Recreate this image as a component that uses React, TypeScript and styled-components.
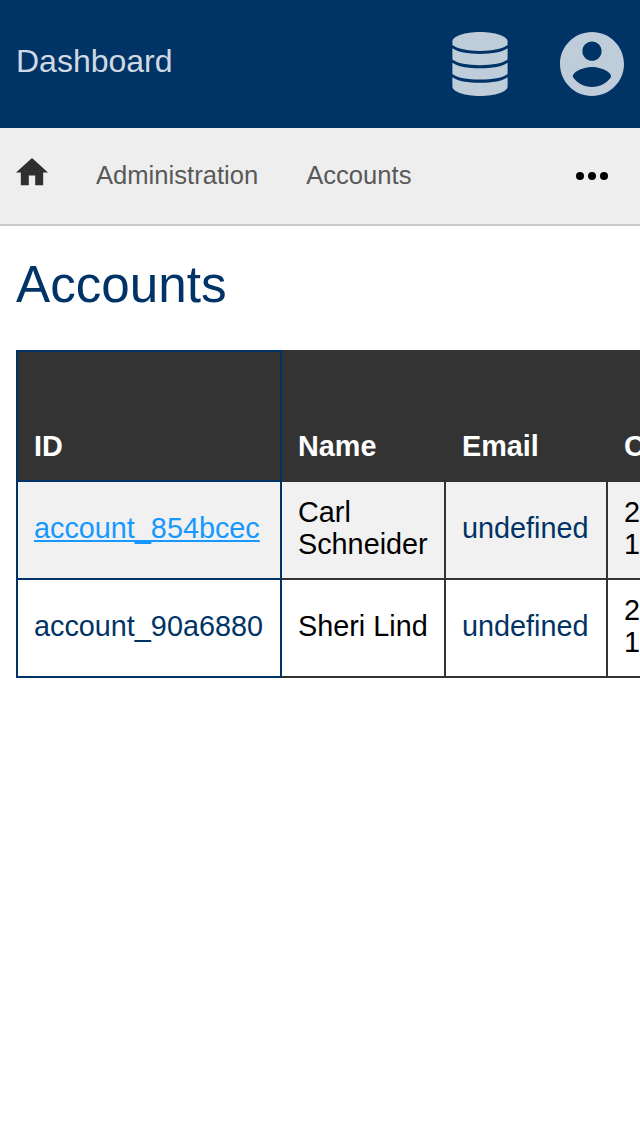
import React from "react";
import styled, { createGlobalStyle, css } from "styled-components";

const GlobalStyle = createGlobalStyle`
  *, *::before, *::after { box-sizing: border-box; }
  html, body { margin: 0; background: #fff; overflow: hidden; }
  body { font-family: "Liberation Sans", Arial, sans-serif; color: #000; }
`;

const Page = styled.div`
  width: 100%;
  height: 1136px;
  overflow: hidden;
`;

const TopBar = styled.header`
  display: flex;
  align-items: center;
  justify-content: space-between;
  height: 128px;
  padding: 0 16px;
  background: #003366;
  color: #bfccd9;
`;

const Brand = styled.a`
  padding-bottom: 6px;
  font-size: 32px;
  line-height: 38px;
  color: #d0d9e1;
`;

const Actions = styled.div`
  display: flex;
  gap: 52px;
`;

const Icon = styled.svg<{ $w: number; $h: number }>`
  display: block;
  flex: none;
  width: ${(p) => p.$w}px;
  height: ${(p) => p.$h}px;
  fill: currentColor;
`;

const Breadcrumbs = styled.nav`
  display: flex;
  align-items: center;
  height: 98px;
  padding: 0 32px 0 16px;
  background: #eee;
  border-bottom: 2px solid #cacaca;
  color: #2f2f2f;
`;

const HomeLink = styled.a`
  margin-right: 48px;
  padding-bottom: 8px;
`;

const Crumb = styled.a`
  margin-right: 48px;
  padding-bottom: 2px;
  font-size: 25.6px;
  line-height: 30px;
  color: #595959;
`;

const MoreButton = styled.button`
  margin-left: auto;
  padding: 0;
  border: 0;
  background: none;
  color: #000;
`;

const Content = styled.main`
  padding: 30px 16px 0;
`;

const Title = styled.h1`
  margin: 0 0 36px;
  font-size: 51.2px;
  font-weight: 400;
  line-height: 58px;
  color: #003366;
`;

const Table = styled.table`
  width: 790px;
  table-layout: fixed;
  border-collapse: collapse;
  font-size: 28.8px;
  line-height: 32px;
`;

const cellBorder = css<{ $key?: boolean }>`
  border: 2px solid ${(p) => (p.$key ? "#003366" : "#333")};
`;

const HeadCell = styled.th<{ $key?: boolean }>`
  ${cellBorder}
  height: 130px;
  padding: 16px 16px 18px;
  background: #333;
  color: #fff;
  text-align: left;
  vertical-align: bottom;
`;

const Row = styled.tr`
  height: 98px;
  &:nth-child(odd) { background: #f1f1f1; }
`;

const Cell = styled.td<{ $key?: boolean }>`
  ${cellBorder}
  padding: 14px 16px 18px;
  vertical-align: middle;
`;

const CellLink = styled.a<{ $active?: boolean }>`
  color: ${(p) => (p.$active ? "#1798ff" : "#003366")};
  text-decoration: ${(p) => (p.$active ? "underline" : "none")};
`;

const accounts = [
  { id: "account_854bcec", name: "Carl Schneider", email: "undefined", created: ["2020-01-01", "12:00:00"], active: true },
  { id: "account_90a6880", name: "Sheri Lind", email: "undefined", created: ["2020-01-01", "12:00:00"], active: false },
];

export default function App() {
  return (
    <Page>
      <GlobalStyle />
      <TopBar>
        <Brand>Dashboard</Brand>
        <Actions>
          <Icon $w={56} $h={64} viewBox="0 0 56 64">
            <path d="M.4 9.500C.4 4.200 12.700 0 28 0s27.600 4.200 27.600 9.500v3.500C51 16.600 40.500 18.900 28 18.900S5 16.600.4 13z" />
            <path d="M.4 16.300C5.500 20 15.500 21.900 28 21.900s22.500-1.900 27.600-5.600v11.200C51 31.100 40.500 33.200 28 33.200S5 31.100.4 27.500z" />
            <path d="M.4 30.700C5.500 34.400 15.500 36.300 28 36.300s22.500-1.900 27.600-5.600v11.200C51 45.500 40.500 47.600 28 47.600S5 45.500.4 41.900z" />
            <path d="M.4 45.200C5.500 48.900 15.500 50.800 28 50.800s22.500-1.900 27.600-5.600v9.300C55.600 59.800 43.300 64 28 64S.4 59.800.4 54.500z" />
          </Icon>
          <Icon $w={64} $h={64} viewBox="2 2 20 20">
            <path d="M12 2C6.480 2 2 6.480 2 12s4.480 10 10 10 10-4.480 10-10S17.520 2 12 2zm0 3c1.660 0 3 1.340 3 3s-1.340 3-3 3-3-1.340-3-3 1.340-3 3-3zm0 14.200c-2.500 0-4.710-1.280-6-3.220.030-1.990 4-3.080 6-3.080 1.990 0 5.970 1.090 6 3.080-1.290 1.940-3.500 3.220-6 3.220z" />
          </Icon>
        </Actions>
      </TopBar>
      <Breadcrumbs>
        <HomeLink>
          <Icon $w={32} $h={27.2} viewBox="2 3 20 17">
            <path d="M10 20v-6h4v6h5v-8h3L12 3 2 12h3v8z" />
          </Icon>
        </HomeLink>
        <Crumb>Administration</Crumb>
        <Crumb>Accounts</Crumb>
        <MoreButton aria-label="More">
          <Icon $w={32} $h={8} viewBox="4 10 16 4">
            <circle cx="6" cy="12" r="2" />
            <circle cx="12" cy="12" r="2" />
            <circle cx="18" cy="12" r="2" />
          </Icon>
        </MoreButton>
      </Breadcrumbs>
      <Content>
        <Title>Accounts</Title>
        <Table>
          <colgroup>
            <col style={{ width: 264 }} />
            <col style={{ width: 164 }} />
            <col style={{ width: 162 }} />
            <col />
          </colgroup>
          <thead>
            <tr>
              <HeadCell $key>ID</HeadCell>
              <HeadCell>Name</HeadCell>
              <HeadCell>Email</HeadCell>
              <HeadCell>Created</HeadCell>
            </tr>
          </thead>
          <tbody>
            {accounts.map((a) => (
              <Row key={a.id}>
                <Cell $key><CellLink $active={a.active}>{a.id}</CellLink></Cell>
                <Cell>{a.name}</Cell>
                <Cell><CellLink>{a.email}</CellLink></Cell>
                <Cell>{a.created[0]}<br />{a.created[1]}</Cell>
              </Row>
            ))}
          </tbody>
        </Table>
      </Content>
    </Page>
  );
}
